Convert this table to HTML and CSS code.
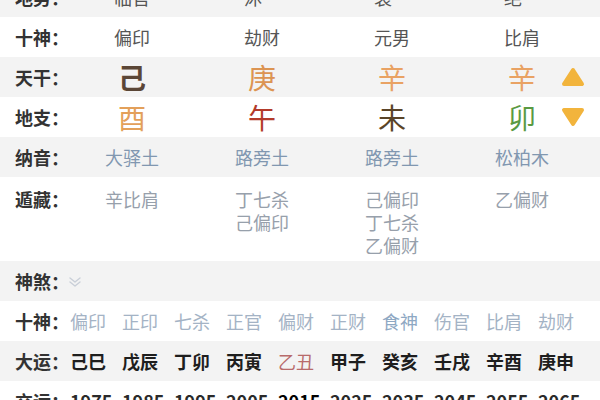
FILE: index.html
```html
<!DOCTYPE html>
<html lang="zh-CN">
<head>
<meta charset="utf-8">
<link rel="stylesheet" href="styles.css">
</head>
<body>
<div class="page">
  <div class="row gray">
    <div class="label">地势：</div>
    <div class="cell top">临官</div>
    <div class="cell top"><span class="lft">沐</span></div>
    <div class="cell top"><span class="lft">衰</span></div>
    <div class="cell top"><span class="lft">绝</span></div>
  </div>
  <div class="row">
    <div class="label">十神：</div>
    <div class="cell top">偏印</div>
    <div class="cell top">劫财</div>
    <div class="cell top">元男</div>
    <div class="cell top">比肩</div>
  </div>
  <div class="row gray big">
    <div class="label">天干：</div>
    <div class="cell gz c-ji">己</div>
    <div class="cell gz c-geng">庚</div>
    <div class="cell gz c-xin">辛</div>
    <div class="cell gz c-xin">辛</div>
    <svg class="tri" width="24" height="20" viewBox="0 0 24 20"><polygon points="12,3 21,17 3,17" fill="#f2b43c" stroke="#f2b43c" stroke-width="4" stroke-linejoin="round"/></svg>
  </div>
  <div class="row big">
    <div class="label">地支：</div>
    <div class="cell gz c-you">酉</div>
    <div class="cell gz c-wu">午</div>
    <div class="cell gz c-wei">未</div>
    <div class="cell gz c-mao">卯</div>
    <svg class="tri" width="24" height="20" viewBox="0 0 24 20"><polygon points="3,3 21,3 12,17" fill="#f2b43c" stroke="#f2b43c" stroke-width="4" stroke-linejoin="round"/></svg>
  </div>
  <div class="row gray">
    <div class="label">纳音：</div>
    <div class="cell nayin">大驿土</div>
    <div class="cell nayin">路旁土</div>
    <div class="cell nayin">路旁土</div>
    <div class="cell nayin">松柏木</div>
  </div>
  <div class="row tall">
    <div class="label">遁藏：</div>
    <div class="cell hide">辛比肩</div>
    <div class="cell hide">丁七杀<br>己偏印</div>
    <div class="cell hide">己偏印<br>丁七杀<br>乙偏财</div>
    <div class="cell hide">乙偏财</div>
  </div>
  <div class="line gray">
    <div class="label2">神煞：</div>
    <svg class="chev" width="14" height="12" viewBox="0 0 14 12"><polyline points="2,2 7,6 12,2" fill="none" stroke="#c9cfd8" stroke-width="1.4" stroke-linecap="round" stroke-linejoin="round"/><polyline points="2,6 7,10 12,6" fill="none" stroke="#c9cfd8" stroke-width="1.4" stroke-linecap="round" stroke-linejoin="round"/></svg>
  </div>
  <div class="line">
    <div class="label2">十神：</div>
    <span class="item ss">偏印</span>
    <span class="item ss">正印</span>
    <span class="item ss">七杀</span>
    <span class="item ss">正官</span>
    <span class="item ss">偏财</span>
    <span class="item ss">正财</span>
    <span class="item ss blue">食神</span>
    <span class="item ss">伤官</span>
    <span class="item ss">比肩</span>
    <span class="item ss">劫财</span>
  </div>
  <div class="line gray">
    <div class="label2">大运：</div>
    <span class="item dy">己巳</span>
    <span class="item dy">戊辰</span>
    <span class="item dy">丁卯</span>
    <span class="item dy">丙寅</span>
    <span class="item dy cur">乙丑</span>
    <span class="item dy">甲子</span>
    <span class="item dy">癸亥</span>
    <span class="item dy">壬戌</span>
    <span class="item dy">辛酉</span>
    <span class="item dy">庚申</span>
  </div>
  <div class="line">
    <div class="label2">交运：</div>
    <span class="item yr">1975</span>
    <span class="item yr">1985</span>
    <span class="item yr">1995</span>
    <span class="item yr">2005</span>
    <span class="item yr now">2015</span>
    <span class="item yr">2025</span>
    <span class="item yr">2035</span>
    <span class="item yr">2045</span>
    <span class="item yr">2055</span>
    <span class="item yr">2065</span>
  </div>
</div>
</body>
</html>
```

FILE: styles.css
```css
html, body {
  margin: 0;
  padding: 0;
  background: #ffffff;
  overflow: hidden;
}
body {
  width: 600px;
  height: 400px;
  font-family: "Noto Sans CJK SC", "Noto Sans", sans-serif;
  font-size: 18px;
  color: #333;
}
.page {
  margin-top: -23px;
}
.gray {
  background: #f3f3f3;
}
.row {
  position: relative;
  display: grid;
  grid-template-columns: 67px 130px 130px 130px 130px;
  height: 40px;
  align-items: center;
}
.row.tall {
  height: 84px;
  align-items: start;
  padding-top: 11px;
  box-sizing: border-box;
}
.label {
  padding-left: 15px;
  font-weight: 700;
  color: #333;
  line-height: 23px;
  white-space: nowrap;
}
.cell {
  text-align: center;
  line-height: 23px;
}
.top {
  color: #555;
}
.lft {
  display: inline-block;
  width: 36px;
  text-align: left;
}
.gz {
  font-size: 28px;
  line-height: 34px;
}
.c-ji { color: #5b4636; font-weight: 700; }
.c-geng { color: #dc9452; }
.c-xin { color: #e9a263; }
.c-you { color: #e3a05a; }
.c-wu { color: #b33a2a; }
.c-wei { color: #5a4428; }
.c-mao { color: #5a9a42; }
.nayin {
  color: #8197b0;
}
.hide {
  color: #97a0ab;
}
.tri {
  position: absolute;
  left: 561px;
  top: 10px;
}
.line {
  display: flex;
  align-items: center;
  height: 40px;
  padding-left: 15px;
}
.label2 {
  width: 55px;
  flex: none;
  font-weight: 700;
  color: #333;
  white-space: nowrap;
}
.chev {
  margin-left: -2px;
  margin-top: 1px;
}
.item {
  width: 52px;
  flex: none;
  white-space: nowrap;
}
.ss {
  color: #a4b3c5;
}
.ss.blue {
  color: #8ea8c3;
}
.dy {
  color: #1e1e1e;
  font-weight: 700;
}
.dy.cur {
  color: #b86b6b;
  font-weight: 400;
}
.yr {
  color: #2a2a2a;
  font-weight: 700;
}
.yr.now {
  color: #000;
}
```
